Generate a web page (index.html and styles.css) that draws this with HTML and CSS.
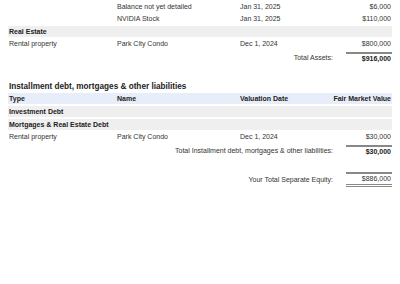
FILE: index.html
```html
<!DOCTYPE html>
<html lang="en">
<head>
  <meta charset="UTF-8" />
  <title>Separate Property Statement</title>
  <link rel="stylesheet" href="styles.css">
</head>
<body>
  <table class="ledger">
    <colgroup>
      <col class="c-type"><col class="c-name"><col class="c-date"><col class="c-value">
    </colgroup>
    <tr><td></td><td>Balance not yet detailed</td><td>Jan 31, 2025</td><td class="num">$6,000</td></tr>
    <tr><td></td><td>NVIDIA Stock</td><td>Jan 31, 2025</td><td class="num">$110,000</td></tr>
    <tr class="group"><td colspan="4">Real Estate</td></tr>
    <tr><td>Rental property</td><td>Park City Condo</td><td>Dec 1, 2024</td><td class="num">$800,000</td></tr>
  </table>
  <div class="total">
    <span class="label">Total Assets:</span>
    <span class="amount strong">$916,000</span>
  </div>

  <h3>Installment debt, mortgages &amp; other liabilities</h3>
  <table class="ledger">
    <colgroup>
      <col class="c-type"><col class="c-name"><col class="c-date"><col class="c-value">
    </colgroup>
    <tr class="head"><th>Type</th><th>Name</th><th>Valuation Date</th><th class="num">Fair Market Value</th></tr>
    <tr class="group"><td colspan="4">Investment Debt</td></tr>
    <tr class="group"><td colspan="4">Mortgages &amp; Real Estate Debt</td></tr>
    <tr><td>Rental property</td><td>Park City Condo</td><td>Dec 1, 2024</td><td class="num">$30,000</td></tr>
  </table>
  <div class="total">
    <span class="label">Total Installment debt, mortgages &amp; other liabilities:</span>
    <span class="amount strong">$30,000</span>
  </div>

  <div class="total equity">
    <span class="label">Your Total Separate Equity:</span>
    <span class="amount final">$886,000</span>
  </div>
</body>
</html>
```

FILE: styles.css
```css
body {
  margin: 0 8px;
  font-family: "Liberation Sans", Arial, sans-serif;
  font-size: 7px;
  color: #333;
  background: #fff;
}

.ledger {
  width: 100%;
  border-collapse: separate;
  border-spacing: 0 1px;
  table-layout: fixed;
}
.c-type { width: 108px; }
.c-name { width: 123px; }
.c-date { width: 90px; }

.ledger td, .ledger th {
  padding: 2px 1px;
  line-height: 7px;
  text-align: left;
  white-space: nowrap;
}
.ledger .num { text-align: right; }

.ledger .group td {
  background: #f0eff0;
  font-weight: bold;
  color: #222;
  border-top: 1px solid #fff;
}
.ledger .head th {
  background: #e8eef9;
  font-weight: bold;
  color: #222;
}

h3 {
  margin: 19px 1px 1px;
  font-size: 8.2px;
  font-weight: bold;
  color: #222;
}

.total {
  display: flex;
  justify-content: flex-end;
  align-items: center;
  gap: 13px;
  margin-top: 2px;
}
.total .amount {
  width: 44px;
  text-align: right;
  border-top: 2px solid #888;
  padding: 1px 1px;
  line-height: 7px;
}
.total .strong { font-weight: bold; color: #222; }
.total.equity { margin-top: 16px; }
.total .final { border-bottom: 3px double #888; padding-bottom: 2px; }
```
